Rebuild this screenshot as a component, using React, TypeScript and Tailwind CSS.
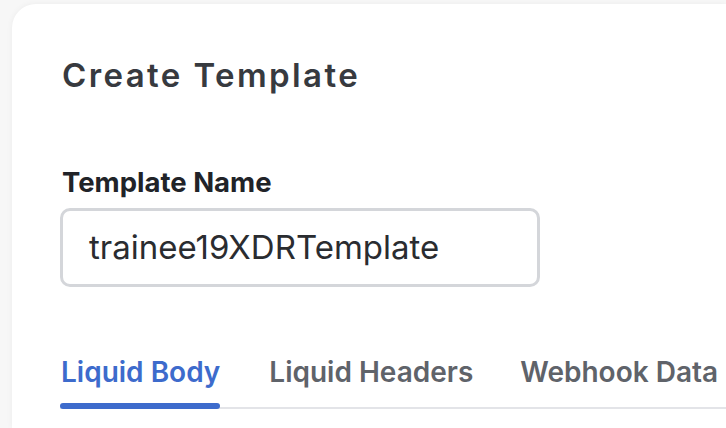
import React from "react";

export default function App() {
  return (
    <div className="w-[726px] h-[428px] overflow-hidden bg-[#f7f7f7] pl-[12px] pt-[4px]">
      <div
        className="h-full w-full rounded-tl-[24px] bg-white shadow-[0_0_6px_rgba(0,0,0,0.05)] pl-[50px] pt-[51px]"
        style={{ fontFamily: "Inter, 'Noto Sans', sans-serif" }}
      >
        <h1 className="text-[33px] leading-[40px] font-semibold text-[#373a3f] tracking-[2.4px]">
          Create Template
        </h1>
        <label className="mt-[71px] block text-[27.5px] leading-[32px] font-bold text-[#212328]">
          Template Name
        </label>
        <div className="mt-[10px] flex h-[79px] w-[480px] -ml-[2px] items-center rounded-[10px] border-[3px] border-[#d4d6da] pl-[26px] text-[33px] text-[#2a2c30]">
          trainee19XDRTemplate
        </div>
        <div className="mt-[67px] flex border-b-2 border-[#e3e4e8] -ml-[2px]">
          <div className="relative pb-[17px] pl-[1px] text-[28px] leading-[36px] font-semibold text-[#3d6bcc] whitespace-nowrap">
            Liquid Body
            <div className="absolute left-0 right-0 -bottom-[2px] h-[6px] rounded-full bg-[#3d6bcc]" />
          </div>
          <div className="ml-[49px] pb-[17px] text-[28px] leading-[36px] font-semibold text-[#5f636a] whitespace-nowrap">
            Liquid Headers
          </div>
          <div className="ml-[47px] pb-[17px] text-[28px] leading-[36px] font-semibold text-[#5f636a] whitespace-nowrap">
            Webhook Data
          </div>
        </div>
      </div>
    </div>
  );
}
